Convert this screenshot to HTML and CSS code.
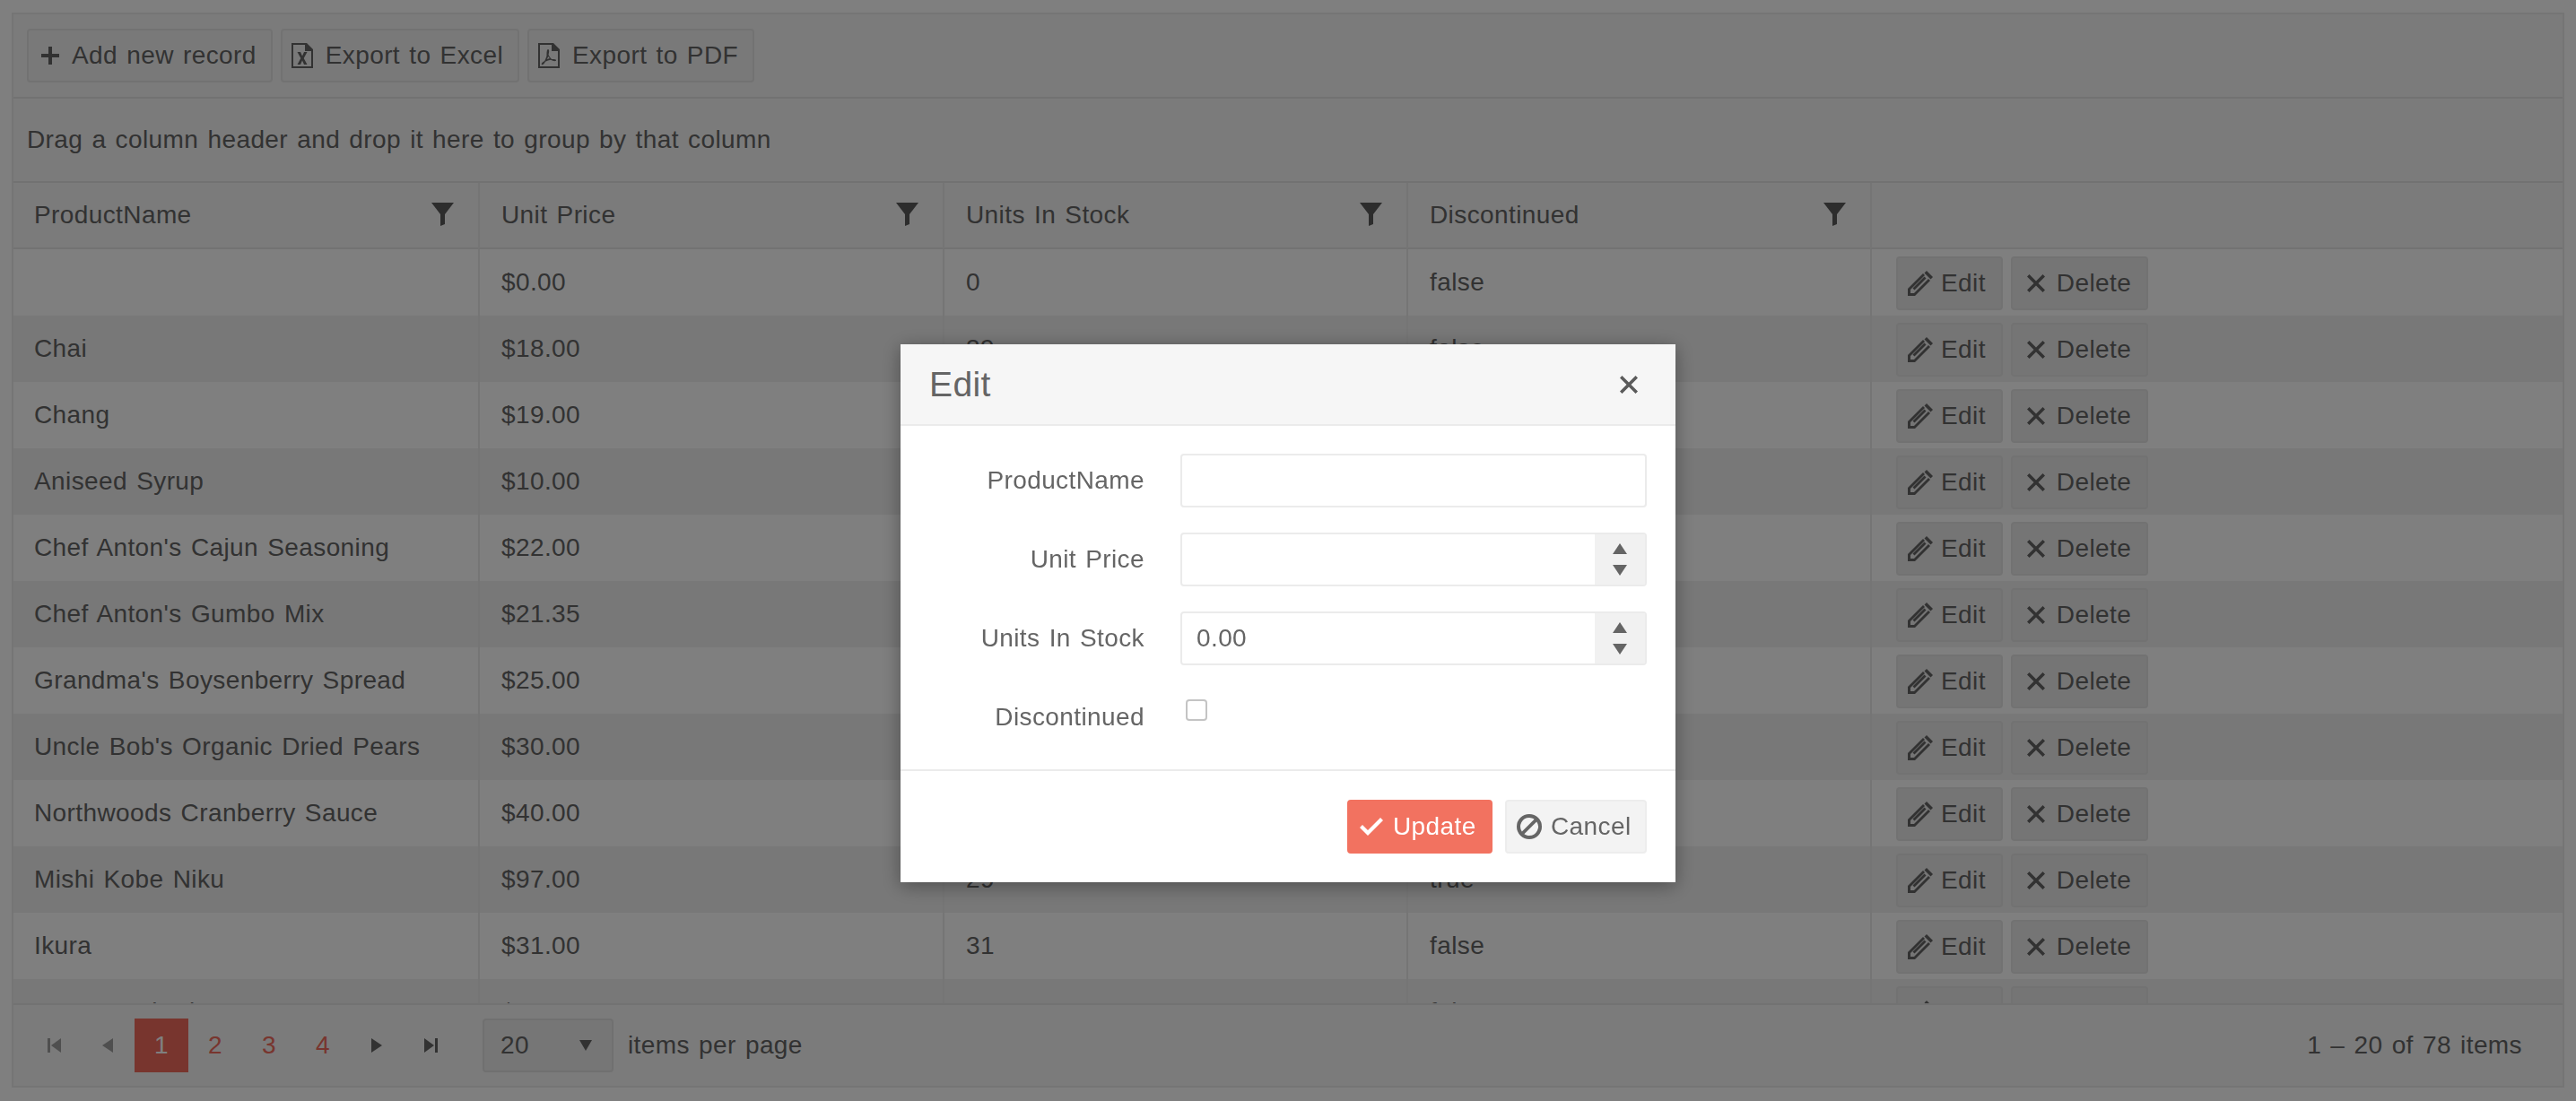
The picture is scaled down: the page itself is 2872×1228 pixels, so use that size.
FILE: index.html
```html
<!DOCTYPE html>
<html lang="en">
<head>
  <meta charset="UTF-8">
  <meta name="viewport" content="width=device-width, initial-scale=1.0">
  <title>Products grid - Edit</title>
  <link rel="stylesheet" href="styles.css">
</head>
<body>
  <svg class="sprite" xmlns="http://www.w3.org/2000/svg">
    <symbol id="i-plus" viewBox="0 0 32 32"><path d="M16 6h4v8h8v4h-8v8h-4v-8H8v-4h8z"/></symbol>
    <symbol id="i-excel" viewBox="0 0 32 32"><path d="M4 2h17l7 7v21H4zM6 4v24h20V11h-7V4z" fill-rule="evenodd"/><path d="M10.500 12h3.500l2 4.500 2-4.500h3.500l-3.800 7 3.800 7H18l-2-4.500-2 4.500h-3.500l3.800-7z"/></symbol>
    <symbol id="i-pdf" viewBox="0 0 32 32"><path d="M4 2h17l7 7v21H4zM6 4v24h20V11h-7V4z" fill-rule="evenodd"/><path d="M15 9c1.500 0 1.500 3 .5 6 1 2 2.500 4 3.500 5 2 0 5-.2 5 1.300 0 1.500-3.500 1-6-.5-2 .4-4 1-6 2-1.500 3-3 4-4 3.200-1-.8 1-3 3.200-4 1-2 1.800-4 2.300-5.700C13.500 13 13.500 9 15 9zm.2 8c-.4 1-.8 2-1.300 3l3-.9c-.7-.6-1.200-1.300-1.700-2.100z" fill-rule="evenodd"/></symbol>
    <symbol id="i-filter" viewBox="0 0 25 26"><path d="M0 0h25L15 13v11l-5 2V13z"/></symbol>
    <symbol id="i-edit" viewBox="0 0 28 28"><path d="M0 20 17 3l2 2L3 21v4h4L23 9l2 2L8 28H0z"/><path d="M18.500 2.500 21 0l7 7-2.500 2.500z"/><path d="M5.500 19.500 18.500 6.500l2 2-13 13z"/></symbol>
    <symbol id="i-close" viewBox="0 0 22 22"><path d="M3.500 1 11 8.500 18.500 1 21 3.500 13.500 11l7.500 7.500-2.500 2.500L11 13.500 3.500 21 1 18.500 8.500 11 1 3.500z"/></symbol>
    <symbol id="i-check" viewBox="0 0 28 28"><path d="M1 15l3-3 6 6L24 4l3 3-17 17z"/></symbol>
    <symbol id="i-cancel" viewBox="0 0 28 28"><path d="M14 0a14 14 0 1 0 0 28 14 14 0 0 0 0-28zm0 4c2.100 0 4 .7 5.600 1.800L5.800 19.600A10 10 0 0 1 14 4zm0 20c-2.100 0-4-.7-5.600-1.800L22.200 8.400A10 10 0 0 1 14 24z" fill-rule="evenodd"/></symbol>
    <symbol id="i-first" viewBox="0 0 15 16"><path d="M0 0h3v16H0zM15 0v16L4 8z"/></symbol>
    <symbol id="i-prev" viewBox="0 0 12 16"><path d="M12 0v16L0 8z"/></symbol>
    <symbol id="i-next" viewBox="0 0 12 16"><path d="M0 0v16l12-8z"/></symbol>
    <symbol id="i-last" viewBox="0 0 15 16"><path d="M12 0h3v16h-3zM0 0v16l11-8z"/></symbol>
  </svg>

  <div class="grid">
    <div class="toolbar">
      <a class="btn"><svg class="icon"><use href="#i-plus"/></svg>Add new record</a>
      <a class="btn"><svg class="icon"><use href="#i-excel"/></svg>Export to Excel</a>
      <a class="btn"><svg class="icon"><use href="#i-pdf"/></svg>Export to PDF</a>
    </div>
    <div class="group-hint">Drag a column header and drop it here to group by that column</div>

    <div class="grid-content">
      <table>
        <colgroup>
          <col class="col-wide"><col class="col-wide"><col class="col-data"><col class="col-data"><col>
        </colgroup>
        <thead>
          <tr>
            <th>ProductName<svg class="filter"><use href="#i-filter"/></svg></th>
            <th>Unit Price<svg class="filter"><use href="#i-filter"/></svg></th>
            <th>Units In Stock<svg class="filter"><use href="#i-filter"/></svg></th>
            <th>Discontinued<svg class="filter"><use href="#i-filter"/></svg></th>
            <th></th>
          </tr>
        </thead>
        <tbody>
          <tr><td></td><td>$0.00</td><td>0</td><td>false</td><td class="actions"><a class="btn btn-row"><svg class="icon-edit"><use href="#i-edit"/></svg>Edit</a><a class="btn btn-row"><svg class="icon-x"><use href="#i-close"/></svg>Delete</a></td></tr>
          <tr class="alt"><td>Chai</td><td>$18.00</td><td>39</td><td>false</td><td class="actions"><a class="btn btn-row"><svg class="icon-edit"><use href="#i-edit"/></svg>Edit</a><a class="btn btn-row"><svg class="icon-x"><use href="#i-close"/></svg>Delete</a></td></tr>
          <tr><td>Chang</td><td>$19.00</td><td>17</td><td>false</td><td class="actions"><a class="btn btn-row"><svg class="icon-edit"><use href="#i-edit"/></svg>Edit</a><a class="btn btn-row"><svg class="icon-x"><use href="#i-close"/></svg>Delete</a></td></tr>
          <tr class="alt"><td>Aniseed Syrup</td><td>$10.00</td><td>13</td><td>false</td><td class="actions"><a class="btn btn-row"><svg class="icon-edit"><use href="#i-edit"/></svg>Edit</a><a class="btn btn-row"><svg class="icon-x"><use href="#i-close"/></svg>Delete</a></td></tr>
          <tr><td>Chef Anton's Cajun Seasoning</td><td>$22.00</td><td>53</td><td>false</td><td class="actions"><a class="btn btn-row"><svg class="icon-edit"><use href="#i-edit"/></svg>Edit</a><a class="btn btn-row"><svg class="icon-x"><use href="#i-close"/></svg>Delete</a></td></tr>
          <tr class="alt"><td>Chef Anton's Gumbo Mix</td><td>$21.35</td><td>0</td><td>true</td><td class="actions"><a class="btn btn-row"><svg class="icon-edit"><use href="#i-edit"/></svg>Edit</a><a class="btn btn-row"><svg class="icon-x"><use href="#i-close"/></svg>Delete</a></td></tr>
          <tr><td>Grandma's Boysenberry Spread</td><td>$25.00</td><td>120</td><td>false</td><td class="actions"><a class="btn btn-row"><svg class="icon-edit"><use href="#i-edit"/></svg>Edit</a><a class="btn btn-row"><svg class="icon-x"><use href="#i-close"/></svg>Delete</a></td></tr>
          <tr class="alt"><td>Uncle Bob's Organic Dried Pears</td><td>$30.00</td><td>15</td><td>false</td><td class="actions"><a class="btn btn-row"><svg class="icon-edit"><use href="#i-edit"/></svg>Edit</a><a class="btn btn-row"><svg class="icon-x"><use href="#i-close"/></svg>Delete</a></td></tr>
          <tr><td>Northwoods Cranberry Sauce</td><td>$40.00</td><td>6</td><td>false</td><td class="actions"><a class="btn btn-row"><svg class="icon-edit"><use href="#i-edit"/></svg>Edit</a><a class="btn btn-row"><svg class="icon-x"><use href="#i-close"/></svg>Delete</a></td></tr>
          <tr class="alt"><td>Mishi Kobe Niku</td><td>$97.00</td><td>29</td><td>true</td><td class="actions"><a class="btn btn-row"><svg class="icon-edit"><use href="#i-edit"/></svg>Edit</a><a class="btn btn-row"><svg class="icon-x"><use href="#i-close"/></svg>Delete</a></td></tr>
          <tr><td>Ikura</td><td>$31.00</td><td>31</td><td>false</td><td class="actions"><a class="btn btn-row"><svg class="icon-edit"><use href="#i-edit"/></svg>Edit</a><a class="btn btn-row"><svg class="icon-x"><use href="#i-close"/></svg>Delete</a></td></tr>
          <tr class="alt"><td>Queso Cabrales</td><td>$21.00</td><td>22</td><td>false</td><td class="actions"><a class="btn btn-row"><svg class="icon-edit"><use href="#i-edit"/></svg>Edit</a><a class="btn btn-row"><svg class="icon-x"><use href="#i-close"/></svg>Delete</a></td></tr>
        </tbody>
      </table>
    </div>

    <div class="pager">
      <a class="page-link disabled"><svg class="arrow-wide"><use href="#i-first"/></svg></a>
      <a class="page-link disabled"><svg class="arrow"><use href="#i-prev"/></svg></a>
      <a class="page-link selected">1</a>
      <a class="page-link">2</a>
      <a class="page-link">3</a>
      <a class="page-link">4</a>
      <a class="page-link"><svg class="arrow"><use href="#i-next"/></svg></a>
      <a class="page-link"><svg class="arrow-wide"><use href="#i-last"/></svg></a>
      <div class="page-size"><span>20</span><i class="caret"></i></div>
      <span class="page-size-label">items per page</span>
      <span class="page-info">1 – 20 of 78 items</span>
    </div>
  </div>

  <div class="overlay"></div>

  <div class="dialog">
    <div class="dialog-title">
      <span>Edit</span>
      <svg class="dialog-close"><use href="#i-close"/></svg>
    </div>
    <div class="dialog-form">
      <label class="form-label">ProductName</label>
      <div class="input"></div>
      <label class="form-label">Unit Price</label>
      <div class="input">
        <span class="input-value"></span>
        <span class="spinner"><i class="spin-up"></i><i class="spin-down"></i></span>
      </div>
      <label class="form-label">Units In Stock</label>
      <div class="input">
        <span class="input-value">0.00</span>
        <span class="spinner"><i class="spin-up"></i><i class="spin-down"></i></span>
      </div>
      <label class="form-label">Discontinued</label>
      <div class="check-cell"><span class="checkbox"></span></div>
    </div>
    <div class="dialog-actions">
      <a class="btn btn-primary"><svg class="icon-check"><use href="#i-check"/></svg>Update</a>
      <a class="btn btn-cancel"><svg class="icon-check"><use href="#i-cancel"/></svg>Cancel</a>
    </div>
  </div>
</body>
</html>
```

FILE: styles.css
```css
* {
  box-sizing: border-box;
}
html, body {
  height: 100%;
}
body {
  margin: 0;
  padding: 14px 13px 15px;
  background: #fff;
  color: #656565;
  font-family: "Liberation Sans", Arial, sans-serif;
  font-size: 28px;
  letter-spacing: .4px;
  word-spacing: 2px;
  overflow: hidden;
}
svg {
  fill: currentColor;
}
.sprite {
  display: none;
}

/* grid */
.grid {
  display: flex;
  flex-direction: column;
  height: 100%;
  border: 2px solid #ebebeb;
}
.toolbar {
  display: flex;
  gap: 9px;
  padding: 16px 15px;
  background: #f6f6f6;
  border-bottom: 2px solid #e4e4e4;
}
.btn {
  display: inline-flex;
  align-items: center;
  height: 60px;
  padding: 0 16px 0 6px;
  background: #f3f3f3;
  border: 2px solid #e4e4e4;
  border-radius: 4px;
  color: #656565;
  white-space: nowrap;
}
.icon {
  width: 32px;
  height: 32px;
  margin-right: 10px;
}
.group-hint {
  display: flex;
  align-items: center;
  height: 94px;
  padding: 0 15px;
  background: #f6f6f6;
  border-bottom: 2px solid #e4e4e4;
}
.grid-content {
  flex: 1;
  overflow: hidden;
}
table {
  width: 100%;
  table-layout: fixed;
  border-collapse: separate;
  border-spacing: 0;
}
.col-wide {
  width: 518px;
}
.col-data {
  width: 517px;
}
th, td {
  height: 74px;
  padding: 0 24px;
  text-align: left;
  font-weight: normal;
  border-left: 2px solid #ebebeb;
  white-space: nowrap;
}
th:first-child, td:first-child {
  border-left: 0;
  padding-left: 23px;
}
th {
  position: relative;
  background: #f6f6f6;
  border-bottom: 2px solid #e4e4e4;
}
.filter {
  position: absolute;
  right: 27px;
  top: 22px;
  width: 25px;
  height: 26px;
  color: #5a5a5a;
}
.alt td {
  background: #f0f0f0;
}
td.actions {
  padding: 2px 27px 0;
}
.btn-row {
  margin-right: 9px;
  padding: 0 17px 0 11px;
  background: #ebebeb;
  vertical-align: middle;
}
.icon-edit {
  width: 28px;
  height: 28px;
  margin: 0 9px 0 0;
}
.icon-x {
  width: 22px;
  height: 22px;
  margin: 0 12px 0 4px;
}

/* pager */
.pager {
  display: flex;
  align-items: center;
  height: 92px;
  padding: 0 15px;
  background: #f6f6f6;
  border-top: 2px solid #e4e4e4;
  flex-shrink: 0;
}
.page-link {
  display: flex;
  align-items: center;
  justify-content: center;
  width: 60px;
  height: 60px;
  color: #f06a5c;
}
.page-link.selected {
  background: #f06a5c;
  color: #fff;
}
.page-link svg {
  color: #656565;
}
.page-link.disabled svg {
  opacity: .6;
}
.arrow {
  width: 12px;
  height: 16px;
}
.arrow-wide {
  width: 15px;
  height: 16px;
}
.page-size {
  display: flex;
  align-items: center;
  justify-content: space-between;
  width: 146px;
  height: 60px;
  margin-left: 28px;
  padding: 0 22px 0 18px;
  background: #ececec;
  border: 2px solid #e0e0e0;
  border-radius: 4px;
}
.caret {
  width: 0;
  height: 0;
  border-left: 7.500px solid transparent;
  border-right: 7.500px solid transparent;
  border-top: 12px solid #656565;
}
.page-size-label {
  margin-left: 16px;
}
.page-info {
  margin-left: auto;
  padding-right: 30px;
}

/* dialog */
.overlay {
  position: fixed;
  inset: 0;
  background: rgba(0, 0, 0, .5);
}
.dialog {
  position: fixed;
  left: 1004px;
  top: 384px;
  width: 864px;
  height: 600px;
  background: #fff;
  box-shadow: 0 4px 20px rgba(0, 0, 0, .35);
  display: flex;
  flex-direction: column;
}
.dialog-title {
  display: flex;
  align-items: center;
  justify-content: space-between;
  height: 91px;
  padding: 0 41px 0 32px;
  background: #f6f6f6;
  border-bottom: 2px solid #ebebeb;
  font-size: 39px;
}
.dialog-close {
  width: 22px;
  height: 22px;
  color: #5a5a5a;
}
.dialog-form {
  display: grid;
  grid-template-columns: 272px 520px;
  grid-auto-rows: 60px;
  row-gap: 28px;
  column-gap: 40px;
  padding: 31px 0 0;
  height: 385px;
  border-bottom: 2px solid #ebebeb;
}
.form-label {
  display: flex;
  align-items: center;
  justify-content: flex-end;
}
.input {
  display: flex;
  border: 2px solid #ebebeb;
  border-radius: 4px;
  background: #fff;
}
.input-value {
  flex: 1;
  display: flex;
  align-items: center;
  padding-left: 16px;
}
.spinner {
  width: 56px;
  display: flex;
  flex-direction: column;
  align-items: center;
  justify-content: center;
  gap: 12px;
  background: #f1f1f1;
}
.spin-up, .spin-down {
  width: 0;
  height: 0;
  border-left: 8.500px solid transparent;
  border-right: 8.500px solid transparent;
}
.spin-up {
  border-bottom: 12px solid #656565;
}
.spin-down {
  border-top: 12px solid #656565;
}
.check-cell {
  padding: 10px 0 0 6px;
}
.checkbox {
  display: block;
  width: 24px;
  height: 24px;
  border: 2px solid #c4c4c4;
  border-radius: 4px;
  background: #fff;
}
.dialog-actions {
  display: flex;
  justify-content: flex-end;
  gap: 14px;
  padding: 32px 32px 0;
}
.btn-primary {
  width: 162px;
  padding: 0 0 0 11px;
  background: #f27260;
  border-color: #f27260;
  color: #fff;
}
.btn-cancel {
  width: 158px;
  padding: 0 0 0 11px;
  background: #f3f3f3;
  border-color: #ededed;
}
.icon-check {
  width: 28px;
  height: 28px;
  margin-right: 10px;
}
```
